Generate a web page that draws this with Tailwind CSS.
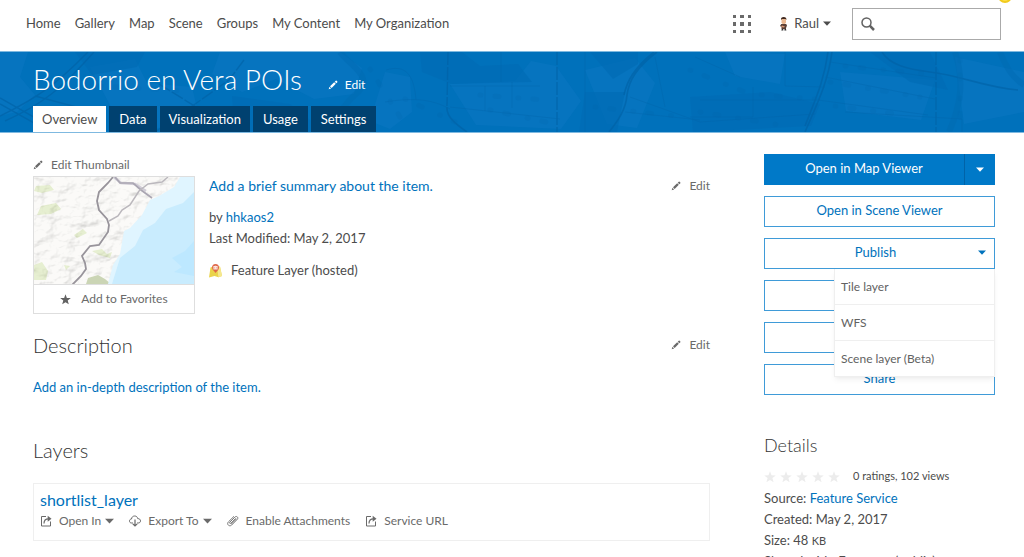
<!DOCTYPE html>
<html lang="en">
<head>
<meta charset="utf-8">
<meta name="viewport" content="width=device-width, initial-scale=1">
<title>Bodorrio en Vera POIs</title>
<script src="https://cdn.jsdelivr.net/npm/@tailwindcss/browser@4"></script>
</head>
<body class="relative overflow-x-hidden bg-white font-['Lato',sans-serif] text-[13px] text-[#4c4c4c]">

<svg width="0" height="0" class="absolute" aria-hidden="true">
  <symbol id="pencil" viewBox="0 0 12 12"><path fill="currentColor" d="M.8 11.2l1-3 2 2zM2.4 7.5l5-4.9 2 2-5 5zM8.1 2l1.2-1.2q.5-.4 1 0l.9.9q.5.5 0 1L10 4z"/></symbol>
  <symbol id="star" viewBox="0 0 12 12"><path fill="currentColor" d="M6 .2l1.5 4.1 4.3.1-3.400 2.700 1.200 4.200L6 8.900l-3.600 2.400 1.200-4.200L.2 4.400l4.300-.1z"/></symbol>
  <symbol id="caret" viewBox="0 0 10 6"><path fill="currentColor" d="M0 .5h10L5 5.700z"/></symbol>
  <symbol id="open" viewBox="0 0 12 12"><path fill="none" stroke="currentColor" d="M6 1.500H1.500v9.500h9V6.500"/><path fill="none" stroke="currentColor" stroke-width="1.200" d="M4 8.500c0-3 1.500-4.700 4.500-4.700"/><path fill="currentColor" d="M7.700.8l3.800 2.900-3.800 3z"/></symbol>
</svg>

<span class="absolute -top-[11px] left-[998px] size-3.5 rounded-full border-2 border-[#f2cb1d] bg-[#ffe14a]"></span>

<header class="flex h-[51px] items-center justify-between pr-[23px] pl-[26px] pb-1">
  <nav class="flex gap-3.5 whitespace-nowrap">
    <a href="#">Home</a><a href="#">Gallery</a><a href="#">Map</a><a href="#">Scene</a><a href="#">Groups</a><a href="#">My Content</a><a href="#">My Organization</a>
  </nav>
  <div class="flex items-center">
    <button aria-label="Apps" class="mr-7">
      <svg class="block" width="18" height="18" fill="#6a6a6a"><path d="M0 0h3v3H0zM7 0h4v3H7zM15 0h3v3h-3zM0 7h3v4H0zM7 7h4v4H7zM15 7h3v4h-3zM0 15h3v3H0zM7 15h4v3H7zM15 15h3v3h-3z"/></svg>
    </button>
    <button class="mr-[21px] flex items-center">
      <svg class="mr-1.5" width="9" height="14" viewBox="0 0 9 14"><path fill="#eab891" d="M2.500 2h4.500v3.500l-1 1.500h-2.500L2.500 5.500z"/><path fill="#42291e" d="M2 3c-.3-2 .8-3 2.700-3s3 1 2.700 3L6.500 2h-3.500z"/><path fill="#5a4036" d="M2.200 7h5l.8 1.500L7 11v1H2.500V10L1 9z"/><path fill="#d89877" d="M3 8.500l3 1-1 1-3-.5z"/><path fill="#333" d="M2.800 12h1.500v1.500H2.300zM5.500 12H7l.4 1.500h-2z"/></svg>
      Raul
      <svg class="ml-1" width="8" height="5" viewBox="0 0 10 6"><use href="#caret"/></svg>
    </button>
    <label class="flex h-8 w-[149px] items-center border border-[#aaa] pl-2">
      <svg width="14" height="14" viewBox="0 0 14 14" fill="none" stroke="#626262" aria-hidden="true"><circle cx="5.500" cy="5.500" r="4.500" stroke-width="1.500"/><path stroke-width="2.500" d="M8.700 8.700l4.300 4.300"/></svg>
      <input type="search" aria-label="Search" class="min-w-0 flex-1 px-2 outline-none">
    </label>
  </div>
</header>

<section class="relative h-[82px] overflow-hidden border-y border-[#7fb9e0] bg-[#0071bb] px-[33px] text-white">
  <svg class="absolute inset-0 size-full" viewBox="0 0 1024 80" preserveAspectRatio="xMidYMid slice" aria-hidden="true">
    <g fill="#0b78c4" opacity=".5"><path d="M0 0h28l-8 25 15 18-18 17-17 4zM90 15l45-8 12 24 45 4 9 38-60 4-30-22zM220 0h120l22 16-8 26-40 5-38-20-34 13-30-18zM385 20l25 5 2 35-22 17-20-8zM450 32l65-3 16-20 25 5 25 35-20 28-85-4zM585 18l50-12 20 25-18 45-30-4zM725 0l60 2-5 30-45-8zM840 20l95 8-14 40-75-9zM955 5l69 15v40l-60 12z"/></g>
    <g fill="#006bb4" opacity=".6"><path d="M75 0h70l-8 15-45 8zM232 44l58 8 35 28h-90zM420 0h42l18 14 38-2 14 18-80 2-30-12zM590 0h48v12l-25 15zM585 40h40l-8 40h-38zM690 45l80-5 50 12-9 22-118 6zM870 0h60l18 38-38-8z"/></g>
    <g fill="none" stroke="#0061a5" opacity=".6">
      <path stroke-width="1.500" d="M0 64c35-17 55-30 88-64M5 69c38-17 56-32 89-69M0 46l60 34M0 52l50 28M35 44l60 16"/>
      <path stroke-dasharray="13 2" stroke-width="1.500" d="M244 8l-15 20-31 22-43 30M159 32l55 34M448 0l-1 54M557 0v80M936 0v80"/>
      <path stroke-width="1.700" d="M447 55c-1 10 10 18 20 25M657 0c-20 15-28 28-30 43-1 15-10 27-18 37M654 0c-20 16-27 29-30 43M832 0c-4 30-14 50-27 80M828 0c-4 30-13 48-23 74M882 0c8 13 25 17 48 20 33 4 53 15 88 18"/>
      <path opacity=".5" d="M386 18c20-6 28 5 30 30M385 50c25-4 45-4 65 7M450 34h90M450 55l110 12M501 0v30M512 30v26M485 34v25M585 0v80M630 45l70 25 115-8M625 60l75 8M655 5l10 50M785 0v34l40 1M830 10l106 16M825 25l110 22M818 48l110 15M845 60l117 7v13M695 5l45 20M690 65h63V35M700 48h120"/>
      <path opacity=".28" stroke-linecap="round" stroke-dasharray="1 14 4 19" stroke-width="5" d="M100 34l85 5M370 17l30 48M405 47l50 23M480 43l65 5M490 58l65 14M595 55l80 9M690 18l60 24 65 5M845 14l80 8M700 60l80 13M830 30l90 15M835 54l70 9M960 8v70"/>
    </g>
    <path fill="none" stroke="#006bb1" stroke-width="6" opacity=".45" d="M340 0c10 14 36 25 16 42-16 14-20 25-17 38M955 0c10 30 5 55-6 80M1000 0c8 20 15 27 24 33"/>
  </svg>
  <div class="relative flex h-[54px] items-center">
    <h1 class="text-[28px] leading-9 font-light">Bodorrio en Vera POIs</h1>
    <button class="mt-3 ml-[26px] flex items-center gap-[7px] text-xs"><svg width="10" height="10"><use href="#pencil"/></svg>Edit</button>
  </div>
  <nav class="relative flex gap-[3px] leading-[26px]">
    <a href="#" class="bg-white px-[9px] text-[#4c4c4c]" aria-current="page">Overview</a>
    <a href="#" class="bg-[#004170] px-2.5">Data</a>
    <a href="#" class="bg-[#004170] px-[9px]">Visualization</a>
    <a href="#" class="bg-[#004170] px-2.5">Usage</a>
    <a href="#" class="bg-[#004170] px-2.5">Settings</a>
  </nav>
</section>

<main class="flex justify-between gap-[54px] pr-[29px] pl-[33px]">
  <div class="min-w-0 flex-1 pt-[23px]">
    <section class="flex">
      <div class="w-[162px] shrink-0 text-xs text-[#6a6a6a]">
        <button class="flex h-5 items-center gap-2 pb-0.5"><svg width="10" height="10"><use href="#pencil"/></svg>Edit Thumbnail</button>
        <div class="border border-[#dedede]">
          <svg class="block w-full" viewBox="0 0 160 107" role="img" aria-label="Map thumbnail">
            <defs><filter id="relief" x="0" y="0" width="100%" height="100%"><feTurbulence type="fractalNoise" baseFrequency=".055 .085" numOctaves="4" seed="7"/><feDiffuseLighting lighting-color="#fff" surfaceScale="5" diffuseConstant="1.150"><feDistantLight azimuth="225" elevation="60"/></feDiffuseLighting></filter></defs>
            <path fill="#faf9f6" d="M0 0h160v107H0z"/>
            <g fill="#dce8bd"><path d="M2 9l14-1 4 5-12 3-8-2zM7 29l15-3 5 6-10 5-14 1zM0 88l8-3 6 9-2 9H0zM58 74l10-2 5 5 5-2-2 6-11-3zM40 58l9-6 4 4-10 5zM30 88l6 1-4 4z"/></g>
            <path filter="url(#relief)" opacity=".3" d="M0 0h160v107H0z"/>
            <path fill="#cbd5b5" d="M52 107l2-6 10-3 7 4 6 5z"/>
            <path fill="#e0f5ff" d="M146 0l-6 10-15 9-9 4-8 15-12 13-6 3-4 23-7 11-5 19h86V0z"/>
            <path fill="#c9ecfe" d="M160 15l-11 11-17 6-11 14-12 7-8 16-15 12-8 26h82z"/>
            <path fill="#bde8ff" d="M160 64l-9 10-13 7 10 9-8 5 20 4z"/>
            <path fill="none" stroke="#d0ccd6" stroke-width="2.500" d="M80 0l7 6 14 1 11 7"/>
            <path fill="none" stroke="#aaa6b2" stroke-width="1.700" d="M81 0l5 6 13 0 8 7 11 8"/>
            <path fill="none" stroke="#bbb8bd" stroke-width="1.500" d="M134 0l-6 5-14 2-9 7-9 14-8 5-4 6-9 5"/>
            <path fill="none" stroke="#98949b" stroke-width="1.800" d="M79 0l-5 6-9 9-2 9 2 9 8 9 2 6-1 7-9 13-9 1-8 10 3 7 1 6-5 7-9 9"/>
          </svg>
          <button class="flex h-[29px] w-full items-center justify-center gap-2.5 border-t border-[#dedede]"><svg class="text-[#626262]" width="11" height="11"><use href="#star"/></svg>Add to Favorites</button>
        </div>
      </div>
      <div class="ml-3.5 flex-1 pt-5">
        <div class="flex items-center justify-between">
          <a href="#" class="text-sm leading-5 text-[#0072bc]">Add a brief summary about the item.</a>
          <button class="flex items-center gap-2 text-xs text-[#6a6a6a]"><svg width="10" height="10"><use href="#pencil"/></svg>Edit</button>
        </div>
        <p class="mt-[11px] leading-[21px]">by <a href="#" class="text-[#0072bc]">hhkaos2</a></p>
        <p class="leading-[21px]">Last Modified: May 2, 2017</p>
        <p class="mt-[11px] flex items-center gap-[9px] leading-[21px]">
          <svg width="13" height="14" viewBox="0 0 13 14" aria-hidden="true"><path fill="#ead34b" d="M1.500 3.500L4 2.500l4 1 3-1L13 12l-3.500 1.200L5.500 12 0 13.500z"/><path fill="#f5e890" d="M8 3.500l3-1L13 12l-3.500 1.200z"/><path fill="#df684a" d="M6.500 0c2.300 0 3.600 1.500 3.600 3.600C10.100 6.100 7.200 8 6.500 9 5.700 7.700 3 6 3 3.600 3 1.500 4.300 0 6.500 0z"/><path fill="none" stroke="#fae4dd" stroke-width="1.200" d="M6.500 1.800v3.800M5 2.500v2.500h3V2.500z"/></svg>
          Feature Layer (hosted)
        </p>
      </div>
    </section>

    <section class="mt-[17px]">
      <div class="flex items-center justify-between">
        <h2 class="text-xl leading-7 font-light text-[#333]">Description</h2>
        <button class="flex items-center gap-2 text-xs text-[#6a6a6a]"><svg width="10" height="10"><use href="#pencil"/></svg>Edit</button>
      </div>
      <a href="#" class="mt-[18px] block leading-5 text-[#0072bc]">Add an in-depth description of the item.</a>
    </section>

    <section class="mt-[39px]">
      <h2 class="text-xl leading-7 font-light text-[#333]">Layers</h2>
      <div class="mt-[19px] h-[58px] border border-[#efefef] px-1.5 pt-[5px]">
        <a href="#" class="block w-fit text-base leading-[22px] text-[#0072bc]">shortlist_layer</a>
        <div class="flex items-center gap-[15px] text-xs leading-5 whitespace-nowrap text-[#6a6a6a]">
          <button class="flex items-center"><svg class="mr-[7px]" width="12" height="12"><use href="#open"/></svg>Open In<svg class="ml-1" width="9" height="6"><use href="#caret"/></svg></button>
          <button class="flex items-center"><svg class="mr-[7px]" width="12" height="12" viewBox="0 0 12 12" fill="none" stroke="currentColor"><path d="M4 8H2.700C1 8 .5 7 .5 6c0-1.200.8-2 2-2C2.700 2 4 1 5.700 1c1.600 0 2.800 1 3 2.600 1.700 0 2.800.9 2.800 2.300S10.500 8 9.200 8H8"/><path stroke-width="1.200" d="M6 4.500V11M3.800 8.800L6 11l2.200-2.200"/></svg>Export To<svg class="ml-1" width="9" height="6"><use href="#caret"/></svg></button>
          <button class="flex items-center gap-[7px]"><svg width="12" height="12" viewBox="0 0 12 12" fill="none" stroke="currentColor" stroke-width=".9"><path d="M8.800 3.300L4 8.100c-.9.900-2-.1-1.100-1l5-5c1.700-1.700 4 .5 2.400 2.200L4.700 10c-2.300 2.200-5.500-.8-3.300-3.100L7 1.300M4.300 9L9.500 3.800"/></svg>Enable Attachments</button>
          <button class="flex items-center gap-[7px]"><svg width="12" height="12"><use href="#open"/></svg>Service URL</button>
        </div>
      </div>
    </section>
  </div>

  <aside class="w-[231px] shrink-0 pt-[21px]">
    <div class="flex flex-col gap-[11px] text-[#0072bc]">
      <div class="flex h-[31px] bg-[#0079c8] text-white">
        <button class="flex-1 border-r border-[#0063a8] pb-0.5">Open in Map Viewer</button>
        <button aria-label="More viewers" class="flex w-[30px] items-center justify-center"><svg width="8" height="5" viewBox="0 0 10 6"><use href="#caret"/></svg></button>
      </div>
      <button class="h-[31px] border border-[#3f9bd8] pb-0.5">Open in Scene Viewer</button>
      <div class="relative">
        <button class="relative flex h-[31px] w-full items-center justify-center border border-[#3f9bd8] pr-2 pb-0.5" aria-expanded="true">Publish<svg class="absolute right-2" width="8" height="5" viewBox="0 0 10 6"><use href="#caret"/></svg></button>
        <ul class="absolute top-full right-0 z-10 w-[161px] divide-y divide-[#efefef] border-x border-b border-[#efefef] bg-white text-xs leading-[35px] text-[#626262] shadow-md shadow-black/5">
          <li><button class="w-full px-1.5 text-left">Tile layer</button></li>
          <li><button class="w-full px-1.5 text-left">WFS</button></li>
          <li><button class="w-full px-1.5 text-left">Scene layer (Beta)</button></li>
        </ul>
      </div>
      <button aria-label="Create View" class="h-[31px] border border-[#3f9bd8]"></button>
      <button aria-label="Export Data" class="h-[31px] border border-[#3f9bd8]"></button>
      <button class="h-[31px] border border-[#3f9bd8] pb-0.5">Share</button>
    </div>
    <h2 class="mt-9 text-lg leading-7 font-light text-[#333]">Details</h2>
    <div class="mt-1.5 flex h-[23px] items-center text-[11px]">
      <div class="flex gap-1 text-[#ececec]" role="img" aria-label="0 of 5 stars"><svg width="12" height="12"><use href="#star"/></svg><svg width="12" height="12"><use href="#star"/></svg><svg width="12" height="12"><use href="#star"/></svg><svg width="12" height="12"><use href="#star"/></svg><svg width="12" height="12"><use href="#star"/></svg></div>
      <span class="ml-[13px]">0 ratings, 102 views</span>
    </div>
    <div class="leading-[21px]">
      <p>Source: <a href="#" class="text-[#0072bc]">Feature Service</a></p>
      <p>Created: May 2, 2017</p>
      <p>Size: 48 <span class="text-[11px]">KB</span></p>
      <p>Shared with: Everyone (public)</p>
    </div>
  </aside>
</main>
</body>
</html>
